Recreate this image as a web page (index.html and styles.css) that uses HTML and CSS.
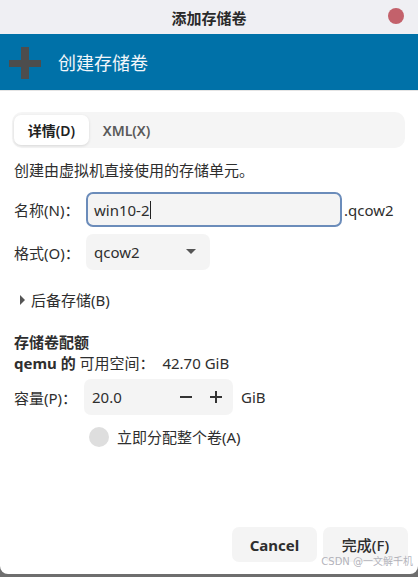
FILE: index.html
```html
<html>
<head>
<meta charset="utf-8" />
<link rel="stylesheet" href="styles.css">
</head>
<body>
<div class="window">
    <div class="titlebar">
        <span class="title">添加存储卷</span>
        <span class="close"></span>
    </div>
    <div class="banner">
        <svg class="plus" width="32" height="32" viewBox="0 0 32 32">
            <rect x="12" y="0" width="8" height="32" fill="#4d4d4d"/>
            <rect x="0" y="13" width="32" height="7" fill="#4d4d4d"/>
        </svg>
        <span class="banner-text">创建存储卷</span>
    </div>

    <div class="content">
        <div class="tabs">
            <div class="tab active">详情(D)</div>
            <div class="tab">XML(X)</div>
        </div>

        <div class="desc">创建由虚拟机直接使用的存储单元。</div>

        <div class="form">
            <label class="label">名称(N)：</label>
            <div class="row">
                <div class="entry focus">win10-2<span class="caret"></span></div>
                <span class="suffix">.qcow2</span>
            </div>
            <label class="label">格式(O)：</label>
            <div class="row">
                <div class="combo">
                    <span>qcow2</span>
                    <svg width="10" height="6" viewBox="0 0 10 6"><path d="M0 0 L10 0 L5 5 Z" fill="#555"/></svg>
                </div>
            </div>
        </div>

        <div class="expander">
            <svg width="6" height="10" viewBox="0 0 6 10"><path d="M0 0 L5 5 L0 10 Z" fill="#555"/></svg>
            <span>后备存储(B)</span>
        </div>

        <div class="quota-title">存储卷配额</div>
        <div class="avail"><b>qemu 的</b> 可用空间：  42.70 GiB</div>

        <div class="form capacity">
            <label class="label">容量(P)：</label>
            <div class="row">
                <div class="spin">
                    <span class="spin-value">20.0</span>
                    <svg width="14" height="14" viewBox="0 0 14 14"><rect x="1" y="6" width="12" height="2" fill="#333"/></svg>
                    <svg width="14" height="14" viewBox="0 0 14 14"><rect x="1" y="6" width="12" height="2" fill="#333"/><rect x="6" y="1" width="2" height="12" fill="#333"/></svg>
                </div>
                <span class="suffix">GiB</span>
            </div>
        </div>

        <div class="check">
            <span class="radio"></span>
            <span>立即分配整个卷(A)</span>
        </div>
    </div>

    <div class="buttons">
        <div class="button bold">Cancel</div>
        <div class="button">完成(F)</div>
    </div>
    <div class="watermark">CSDN @一文解千机</div>
</div>
</body>
</html>
```

FILE: styles.css
```css
* {
    box-sizing: border-box;
}
body {
    margin: 0px;
    background: #6e6e6e;
    font-family: "Noto Sans", "Noto Sans CJK SC", sans-serif;
    font-size: 15px;
    color: #2e2e2e;
}
.window {
    width: 418px;
    height: 574px;
    background: #ffffff;
    border-radius: 0 0 8px 8px;
    display: flex;
    flex-direction: column;
    position: relative;
    overflow: hidden;
}
.titlebar {
    height: 34px;
    background: #efeff3;
    display: flex;
    align-items: center;
    justify-content: center;
    position: relative;
}
.title {
    font-family: "Noto Sans CJK SC", sans-serif;
    font-weight: bold;
    font-size: 15px;
    color: #2a2a2a;
}
.close {
    position: absolute;
    right: 14px;
    top: 8px;
    width: 16px;
    height: 16px;
    border-radius: 50%;
    background: #c3616b;
}
.banner {
    height: 57px;
    background: #0071a8;
    display: flex;
    align-items: center;
    border-bottom: 1px solid #e4e4e4;
}
.plus {
    margin-left: 9px;
    margin-top: 2px;
}
.banner-text {
    margin-left: 17px;
    font-family: "Noto Sans CJK SC", sans-serif;
    font-size: 18px;
    color: #f2f6fa;
}
.content {
    padding: 21px 13px 0 14px;
    display: flex;
    flex-direction: column;
}
.tabs {
    margin-left: -2px;
    height: 36px;
    background: #f5f5f5;
    border-radius: 10px;
    display: flex;
    align-items: center;
    padding: 0 2px;
}
.tab {
    height: 30px;
    width: 75px;
    display: flex;
    align-items: center;
    justify-content: center;
    font-weight: 600;
    color: #5a5a5a;
    font-size: 14px;
}
.tab.active {
    background: #ffffff;
    border-radius: 7px;
    color: #222;
    box-shadow: 0 1px 3px rgba(0,0,0,0.12);
}
.desc {
    margin-top: 12px;
    line-height: 20px;
}
.form {
    margin-top: 12px;
    display: grid;
    grid-template-columns: 72px auto;
    row-gap: 7px;
    align-items: center;
}
.row {
    display: flex;
    align-items: center;
}
.entry {
    width: 256px;
    height: 35px;
    border: 2px solid #6b8cba;
    border-radius: 7px;
    background: #f4f4f4;
    display: flex;
    align-items: center;
    padding-left: 6px;
}
.caret {
    width: 1px;
    height: 18px;
    background: #222;
}
.suffix {
    margin-left: 2px;
}
.combo {
    width: 124px;
    height: 36px;
    border-radius: 7px;
    background: #f4f4f4;
    display: flex;
    align-items: center;
    justify-content: space-between;
    padding: 0 14px 0 8px;
}
.expander {
    margin-top: 20px;
    margin-left: 6px;
    display: flex;
    align-items: center;
    gap: 5px;
    line-height: 20px;
}
.quota-title {
    margin-top: 22px;
    font-weight: bold;
    line-height: 20px;
}
.avail {
    margin-top: 1px;
    line-height: 20px;
    white-space: pre;
}
.capacity {
    margin-top: 6px;
    grid-template-columns: 70px auto;
}
.spin {
    width: 149px;
    height: 36px;
    border-radius: 7px;
    background: #f4f4f4;
    display: flex;
    align-items: center;
    padding-left: 8px;
    padding-right: 10px;
    gap: 16px;
}
.spin-value {
    flex: 1;
}
.capacity .suffix {
    margin-left: 8px;
}
.check {
    margin-top: 11px;
    margin-left: 75px;
    display: flex;
    align-items: center;
    gap: 8px;
}
.radio {
    width: 20px;
    height: 20px;
    border-radius: 50%;
    background: #dedede;
}
.buttons {
    margin-top: auto;
    margin-bottom: 12px;
    padding-right: 10px;
    display: flex;
    justify-content: flex-end;
    gap: 6px;
}
.button {
    width: 85px;
    height: 35px;
    border-radius: 7px;
    background: #f4f4f4;
    display: flex;
    align-items: center;
    justify-content: center;
    font-weight: 500;
}
.bold {
    font-weight: bold;
}
.watermark {
    position: absolute;
    right: 5px;
    bottom: 6px;
    font-family: "DejaVu Sans", "Noto Sans CJK SC", sans-serif;
    font-size: 10px;
    color: rgba(160,160,170,0.8);
}
```
